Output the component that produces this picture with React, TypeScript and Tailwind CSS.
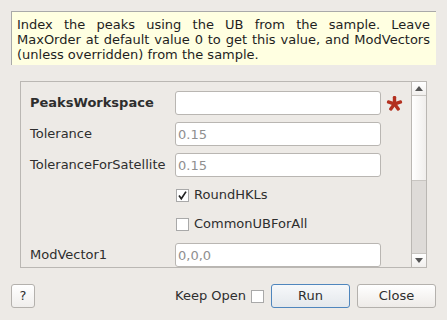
import React, { useState } from 'react';

const Checkbox: React.FC<{ checked: boolean; onChange: () => void }> = ({ checked, onChange }) => (
    <button
        onClick={onChange}
        className="w-[13px] h-[13px] bg-white border border-[#a9a9a9] flex items-center justify-center p-0 shrink-0"
    >
        {checked && (
            <svg width="11" height="11" viewBox="0 0 11 11">
                <path d="M2 5.5 L4.3 8.8 L9 1.6" fill="none" stroke="#222" strokeWidth="1.7" />
            </svg>
        )}
    </button>
);

const TextField: React.FC<{ placeholder?: string }> = ({ placeholder }) => (
    <input
        type="text"
        placeholder={placeholder}
        className="w-[206px] h-[24px] bg-white border border-[#b9b6b2] rounded-[3px] px-[2px] text-[13px] text-[#2e2e2e] placeholder:text-[#8f8f8f] outline-none shrink-0"
    />
);

const Row: React.FC<{ label: string; bold?: boolean; children: React.ReactNode; className?: string }> = ({ label, bold, children, className }) => (
    <div className={`flex items-center h-[24px] ${className ?? ''}`}>
        <span className={`w-[145px] shrink-0 ${bold ? 'font-bold' : ''}`}>{label}</span>
        {children}
    </div>
);

const App: React.FC = () => {
    const [roundHKLs, setRoundHKLs] = useState(true);
    const [commonUB, setCommonUB] = useState(false);
    const [keepOpen, setKeepOpen] = useState(false);

    return (
        <div
            className="w-[447px] h-[320px] bg-[#edeae6] flex flex-col text-[13px] text-[#2e2e2e] overflow-hidden"
            style={{ fontFamily: '"DejaVu Sans", sans-serif' }}
        >
            <div className="mx-[11px] mt-[11px] h-[54px] border-t border-l border-[#a9a9a9] bg-[#ffffe1] pl-[5px] pr-[6px] pt-[5px] leading-[15px] text-justify text-[#1e1e1e]">
                Index the peaks using the UB from the sample. Leave MaxOrder at default value 0 to get this value, and ModVectors (unless overridden) from the sample.
            </div>

            <div className="ml-[20px] mt-[16px] w-[407px] h-[187px] border border-[#bab7b3] flex overflow-hidden">
                <div className="flex-1 flex flex-col pl-[9px] pt-[9px] overflow-hidden">
                    <Row label="PeaksWorkspace" bold>
                        <TextField />
                        <svg width="17" height="17" viewBox="0 0 16 16" className="ml-[5px] mt-[1px]">
                            <g fill="#b3301f" transform="translate(8 8.4)">
                                {[0, 72, 144, 216, 288].map(a => (
                                    <rect key={a} x="-1.6" y="-7.4" width="3.2" height="7.6" rx="1.2" transform={`rotate(${a})`} />
                                ))}
                            </g>
                        </svg>
                    </Row>
                    <Row label="Tolerance" className="mt-[7px]">
                        <TextField placeholder="0.15" />
                    </Row>
                    <Row label="ToleranceForSatellite" className="mt-[7px]">
                        <TextField placeholder="0.15" />
                    </Row>
                    <div className="flex items-center h-[22px] mt-[7px] pl-[146px] gap-[5px]">
                        <Checkbox checked={roundHKLs} onChange={() => setRoundHKLs(!roundHKLs)} />
                        <span>RoundHKLs</span>
                    </div>
                    <div className="flex items-center h-[22px] mt-[7px] pl-[146px] gap-[5px]">
                        <Checkbox checked={commonUB} onChange={() => setCommonUB(!commonUB)} />
                        <span>CommonUBForAll</span>
                    </div>
                    <Row label="ModVector1" className="mt-[8px]">
                        <TextField placeholder="0,0,0" />
                    </Row>
                </div>

                <div className="w-[15px] shrink-0 border-l border-[#bab7b3] flex flex-col">
                    <div className="h-[14px] border-b border-[#c8c5c1] bg-gradient-to-b from-white to-[#f1efed] flex items-center justify-center">
                        <svg width="8" height="5" viewBox="0 0 8 5"><path d="M0 5 L4 0 L8 5 Z" fill="#555" /></svg>
                    </div>
                    <div className="h-[85px] bg-gradient-to-r from-white to-[#f0eeec] border-b border-[#c8c5c1]" />
                    <div className="flex-1 bg-[#dedbd8]" />
                    <div className="h-[14px] border-t border-[#c8c5c1] bg-gradient-to-b from-white to-[#f1efed] flex items-center justify-center">
                        <svg width="8" height="5" viewBox="0 0 8 5"><path d="M0 0 L8 0 L4 5 Z" fill="#555" /></svg>
                    </div>
                </div>
            </div>

            <div className="flex items-center mt-[16px] px-[11px] h-[24px]">
                <button className="w-[24px] h-[24px] border border-[#b4b1ad] rounded-[3px] bg-gradient-to-b from-white to-[#f0eeec] text-[13px]">?</button>
                <div className="flex-1" />
                <span>Keep Open</span>
                <div className="ml-[5px]">
                    <Checkbox checked={keepOpen} onChange={() => setKeepOpen(!keepOpen)} />
                </div>
                <button className="ml-[7px] w-[79px] h-[24px] border border-[#4f86bd] rounded-[3px] bg-gradient-to-b from-[#f6f8fa] to-[#e4e8ec]">Run</button>
                <button className="ml-[7px] w-[79px] h-[24px] border border-[#b4b1ad] rounded-[3px] bg-gradient-to-b from-white to-[#eeebe8]">Close</button>
            </div>
        </div>
    );
};

export default App;
